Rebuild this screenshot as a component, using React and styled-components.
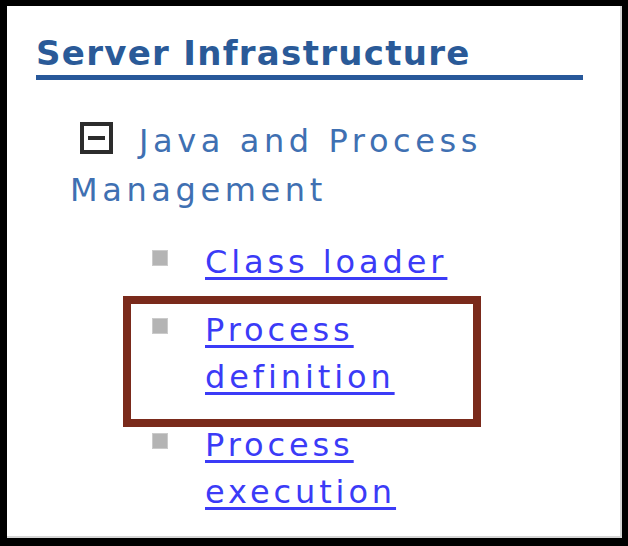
import React from "react";
import styled, { createGlobalStyle, css } from "styled-components";

const Global = createGlobalStyle`
  html, body {
    margin: 0;
    padding: 0;
    background: #000;
  }
  body {
    width: 628px;
    height: 546px;
    overflow: hidden;
    font-family: "DejaVu Sans", Verdana, sans-serif;
  }
`;

const Frame = styled.div`
  box-sizing: border-box;
  width: 628px;
  height: 546px;
  padding: 6px 6px 8px 7px;
  background: #000;
`;

const Panel = styled.div`
  box-sizing: border-box;
  height: 100%;
  background: #fff;
  padding: 27px 39px 0 29px;
  box-shadow: inset -2px -2px 0 #d6d6d6;
`;

const Heading = styled.h2`
  margin: 0;
  font-size: 34px;
  line-height: 40px;
  font-weight: bold;
  letter-spacing: 1.3px;
  color: #2a5a98;
  padding-bottom: 2px;
  border-bottom: 5px solid #28589a;
`;

const Node = styled.div`
  margin: 37px 0 0 34px;
  font-size: 32px;
  line-height: 49px;
  letter-spacing: 4.6px;
  color: #3f70b2;
`;

const Toggle = styled.span`
  display: inline-block;
  box-sizing: border-box;
  width: 33px;
  height: 32px;
  margin: 0 26px 0 10px;
  border: 4px solid #2c2c2c;
  vertical-align: -2px;
  position: relative;
  &::after {
    content: "";
    position: absolute;
    left: 4px;
    right: 4px;
    top: 10px;
    height: 4px;
    background: #2c2c2c;
  }
`;

const List = styled.ul`
  list-style: none;
  margin: 24px 0 0 116px;
  padding: 0;
  display: flex;
  flex-direction: column;
  gap: 21px;
`;

const Item = styled.li`
  position: relative;
  display: flex;
  align-items: flex-start;
  ${(p) =>
    p.$marked &&
    css`
      &::after {
        content: "";
        position: absolute;
        left: -29px;
        top: -11px;
        width: 358px;
        height: 131px;
        box-sizing: border-box;
        border: 8px solid #7a2a1b;
        pointer-events: none;
      }
    `}
`;

const Bullet = styled.span`
  flex: none;
  box-sizing: border-box;
  width: 16px;
  height: 16px;
  margin: 11px 37px 0 0;
  background: #b4b4b4;
  border: 1px solid #cbcbcb;
`;

const Link = styled.a`
  font-size: 32px;
  line-height: 47px;
  letter-spacing: 3.9px;
  color: #3b3bf7;
  text-decoration: underline;
  text-decoration-thickness: 3px;
  text-underline-offset: 4px;
  width: ${(p) => (p.$wide ? "auto" : "220px")};
`;

const links = [
  { label: "Class loader", wide: true },
  { label: "Process definition", marked: true },
  { label: "Process execution" },
];

export default function App() {
  return (
    <>
      <Global />
      <Frame>
        <Panel>
          <Heading>Server Infrastructure</Heading>
          <Node>
            <Toggle />
            Java and Process Management
          </Node>
          <List>
            {links.map((l) => (
              <Item key={l.label} $marked={l.marked}>
                <Bullet />
                <Link href="#" $wide={l.wide}>
                  {l.label}
                </Link>
              </Item>
            ))}
          </List>
        </Panel>
      </Frame>
    </>
  );
}
